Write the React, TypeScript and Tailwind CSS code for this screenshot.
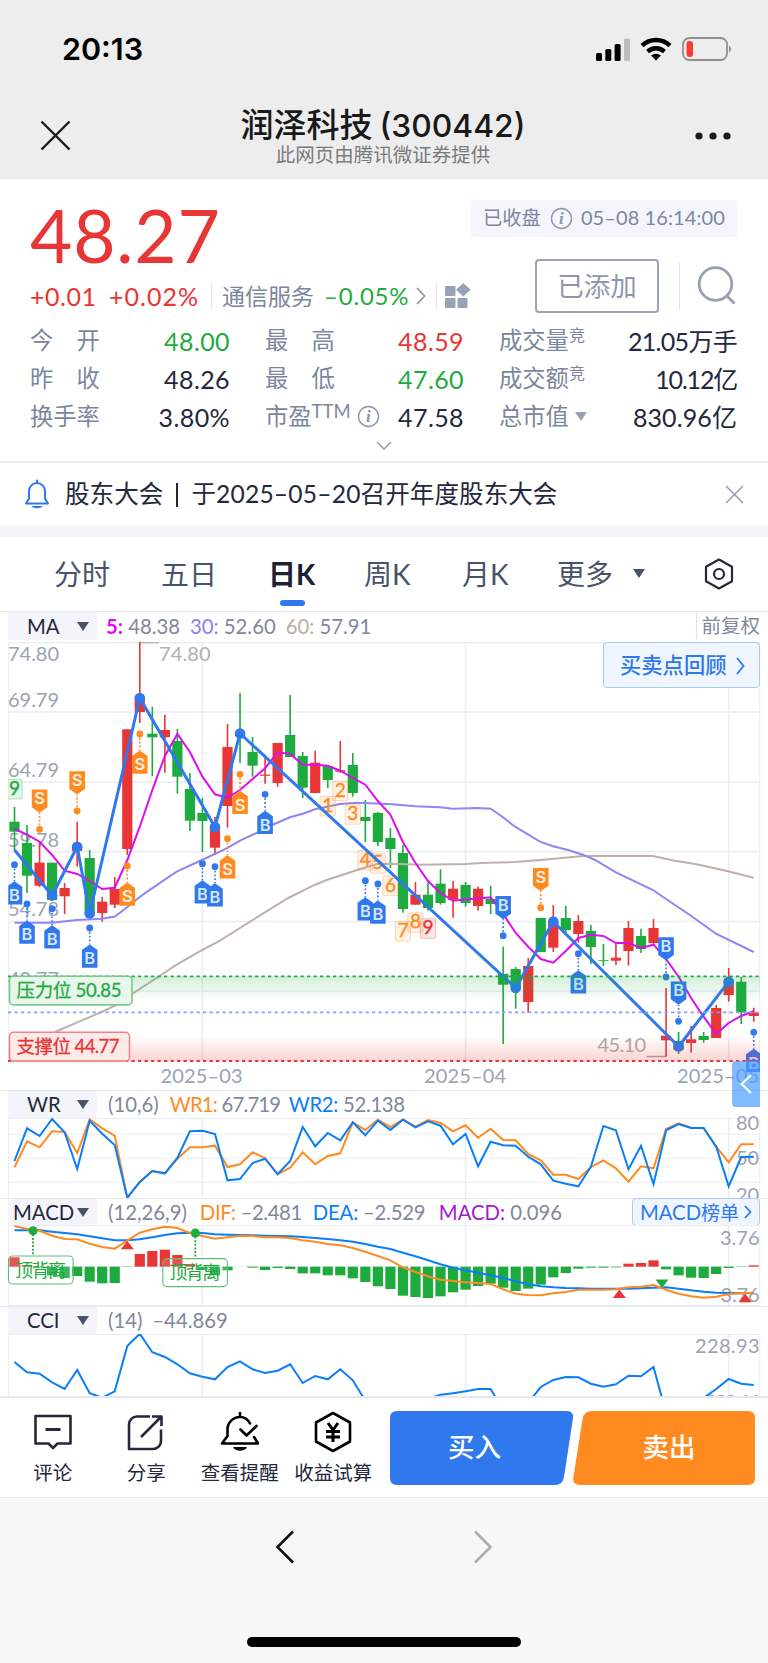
import React from "react";

const RED = "#e83535";
const GREEN = "#1dab3e";
const ORANGE = "#ff8a1f";
const BLUE = "#2f78ee";
const GRID = "#ebedf3";

const X0 = 14.5;
const STEP = 12.53;
const px = (i: number) => X0 + STEP * i;

type Candle = ["r" | "g", number, number, number, number];

// colour, high, low, body top, body bottom
const candles: Candle[] = [
  ["g", 807, 850, 821.7, 831.7],
  ["g", 825, 893, 843, 875.7],
  ["r", 841.7, 887, 862.7, 885.7],
  ["g", 862.7, 901, 862.7, 900],
  ["r", 883, 914, 888, 896.3],
  ["r", 821.7, 866.7, 846, 851],
  ["g", 850, 915, 858, 913],
  ["r", 897, 921.7, 901.7, 913],
  ["r", 877, 908, 889, 904.7],
  ["r", 729.3, 855, 729.3, 849],
  ["r", 642, 723, 698, 712],
  ["g", 706.7, 776, 733.7, 737.3],
  ["r", 714.7, 772.7, 730, 737.3],
  ["g", 729, 793.7, 741, 776.7],
  ["g", 773, 831, 789, 820.7],
  ["g", 798, 852, 813, 821],
  ["r", 817, 855, 826.7, 847.7],
  ["r", 724, 827.7, 747, 806],
  ["g", 693, 763, 733, 736],
  ["g", 737, 776.7, 752, 765.7],
  ["r", 758, 783.7, 774.6, 775.8],
  ["r", 743, 786.7, 743, 783],
  ["g", 695, 757, 735, 757],
  ["g", 752, 798, 756, 787.7],
  ["r", 750.7, 793, 762.7, 793],
  ["g", 766, 788, 766, 780],
  ["r", 741, 773, 770.3, 771.8],
  ["g", 753, 796.7, 765, 793],
  ["g", 800, 842, 817, 821],
  ["g", 812, 846, 813, 842],
  ["g", 828, 868, 838, 849],
  ["g", 845, 912.7, 853, 909],
  ["r", 882, 904.7, 894.7, 904.7],
  ["g", 882.3, 910.7, 894.7, 908],
  ["g", 869.3, 904.7, 883.7, 903],
  ["r", 881, 917.7, 888.7, 899.7],
  ["g", 882, 906.7, 885, 903],
  ["r", 886.7, 910.7, 888.7, 906],
  ["g", 885.7, 914, 899, 904],
  ["g", 946.7, 1044, 974, 984.7],
  ["g", 967, 1008.7, 969, 987],
  ["r", 958, 1013, 966, 1002],
  ["g", 918, 952, 918, 952],
  ["r", 905, 952, 921.7, 947.7],
  ["g", 906, 935, 918, 930],
  ["r", 915, 942.7, 921, 934],
  ["g", 925, 964, 931, 947],
  ["g", 944, 966, 960, 960.8],
  ["r", 943, 965, 957.7, 960.7],
  ["r", 921, 965.7, 928, 951],
  ["g", 928.7, 953, 936, 949],
  ["r", 919, 945, 928, 943],
  ["r", 988, 1056.7, 1035.7, 1040.3],
  ["g", 1032, 1054, 1041, 1050],
  ["r", 1026, 1052.7, 1039.3, 1043],
  ["g", 1032, 1042.7, 1036, 1040],
  ["r", 1005, 1038, 1008, 1038],
  ["r", 968, 1001.7, 980, 995],
  ["g", 977, 1024, 981.7, 1012.3],
  ["r", 1007.7, 1021.7, 1012.7, 1016],
];

const ma5 = [
  829, 834.7, 841.7, 855, 870.7, 874, 881, 889, 887.7, 860, 826.7, 790, 756, 734, 752, 776.7, 794.3, 797.7, 790, 779,
  768.3, 752.3, 754, 764.7, 764.7, 765.7, 770.7, 778, 784.7, 801, 814.7, 842, 863, 881, 893, 900.7, 899.5, 898.5, 897.3,
  914, 933, 946.7, 959, 962.7, 951, 938, 934.7, 936, 943, 943, 948, 944.7, 959, 976.7, 998, 1016.7, 1034, 1023, 1016,
  1011,
];

const ma30 =
  "14.5,922.7 52,922.7 77,920 102,918.7 115,916.5 128,906.5 143.3,894.3 163.3,880.7 176.7,871.7 202,860 226.7,848.3 240,840.7 260,831.3 272,825 290,817.3 302.7,813.7 315,809.3 340,804 352.7,803 365,803 391.7,804.3 415,806.3 440,807.3 453,808.7 478,808 490.7,808.7 503,817.3 515,826.7 540,841.7 553,846.3 568,850 583,854.7 595,860 616,872.3 653,890 666,899 691,915.7 716,933.7 753.7,952";
const ma60 =
  "55,1032 76.7,1022.7 100,1012.7 115,1005.7 133,993.3 155,979 175,965.7 202.3,950 220,940.7 260,915.3 288.3,898 315,884.7 326.7,880 355,870.7 376.7,864 390.7,863.7 421.7,864.7 465,864 488,862.7 515,862 541,860 583,856 618,856 653,856 674.7,860.7 691,863.3 704.7,866 728,871.3 753.7,877.7";

const swing: [number, number][] = [
  [3, 895.5], [5, 846.7], [6, 913.5], [10, 698], [16, 827], [18, 733.5], [40, 988], [43, 921.5], [53, 1046.5], [57, 981.7],
];

// candle index, anchor dot y, letter, direction of the box from the dot
const signals: [number, number, "S" | "B", "up" | "down"][] = [
  [2, 829.3, "S", "up"], [5, 811, "S", "up"], [10, 734, "S", "down"], [18, 774.3, "S", "down"],
  [17, 838.7, "S", "down"], [9, 866, "S", "down"], [42, 907.7, "S", "up"],
  [0, 864.7, "B", "down"], [1, 904, "B", "down"], [3, 908.7, "B", "down"], [6, 928, "B", "down"],
  [15, 863.7, "B", "down"], [16, 866.7, "B", "down"], [20, 794.3, "B", "down"], [28, 880.7, "B", "down"],
  [29, 884, "B", "down"], [45, 953.7, "B", "down"], [59, 1032.3, "B", "down"],
  [39, 935.7, "B", "up"], [52, 977, "B", "up"], [53, 1021.3, "B", "up"],
];

const counts: [number, number, string, string][] = [
  [0, 779, "9", GREEN], [25, 796, "1", ORANGE], [26, 780.7, "2", ORANGE], [27, 804.3, "3", ORANGE],
  [28, 850, "4", ORANGE], [29, 853.3, "5", ORANGE], [30, 875.7, "6", ORANGE], [31, 921, "7", ORANGE],
  [32, 912.3, "8", ORANGE], [33, 918.3, "9", RED],
];

const wr2 = [
  228, 130, 153, 102, 142, 252, 107, 146, 180, 338, 291, 258, 265, 219, 139, 137, 147, 286, 282, 234, 221, 268, 228, 126,
  184, 144, 166, 112, 151, 107, 135, 104, 127, 109, 122, 178, 147, 244, 170, 181, 182, 215, 238, 287, 296, 304, 245, 123,
  136, 253, 182, 298, 136, 117, 129, 129, 185, 304, 216, 215,
];
const wr1 = [
  247, 169, 187, 139, 141, 204, 103, 130, 152, 338, 291, 258, 265, 221, 187, 187, 182, 246, 238, 202, 220, 268, 248, 202,
  238, 213, 205, 112, 135, 104, 126, 103, 125, 105, 113, 139, 121, 158, 131, 165, 166, 207, 226, 269, 269, 282, 246, 226,
  250, 290, 244, 250, 132, 115, 128, 129, 185, 232, 178, 178,
];
const dif = [
  423, 432, 437, 452, 462, 463, 476, 486, 491, 467, 443, 433, 425, 429, 444, 453, 461, 457, 452, 453, 457, 457, 459, 466,
  470, 477, 481, 489, 500, 513, 526, 547, 561, 574, 584, 588, 592, 594, 597, 613, 626, 630, 631, 625, 621, 614, 614, 614,
  613, 607, 605, 600, 614, 626, 634, 638, 635, 627, 625, 623,
];
const dea = [
  436, 436, 436, 440, 444, 448, 454, 460, 466, 466, 463, 457, 450, 445, 443, 444, 448, 449, 450, 451, 452, 453, 454, 456,
  459, 462, 466, 470, 477, 485, 492, 503, 514, 526, 538, 548, 556, 563, 571, 579, 589, 598, 604, 607, 609, 610, 611, 611,
  611, 611, 610, 608, 607, 611, 616, 620, 623, 624, 625, 624,
];
const bars = [
  517, 540, 548, 571, 579, 573, 590, 595, 594, 546, 507, 498, 494, 510, 537, 555, 571, 556, 545, 548, 555, 549, 552, 565,
  565, 571, 571, 580, 591, 604, 612, 632, 636, 639, 634, 622, 614, 603, 596, 608, 618, 611, 599, 577, 564, 551, 548, 548,
  547, 536, 534, 526, 553, 571, 578, 579, 567, 549, 546, 541,
];
const cci = [
  831, 862, 866, 892, 912, 855, 925, 938, 919, 783, 746, 802, 816, 838, 865, 875, 883, 846, 829, 853, 864, 857, 838, 894,
  873, 883, 853, 886, 947, 965, 965, 965, 955, 942, 929, 925, 919, 912, 912, 975, 975, 953, 906, 885, 876, 877, 896, 905,
  898, 872, 874, 846, 984, 990, 980, 939, 912, 882, 896, 900,
];

const sub = (v: number) => 1085 + v / 3;
const pts = (ys: number[]) => ys.map((y, i) => `${px(i).toFixed(1)},${y.toFixed(1)}`).join(" ");

const CJK = "font-[Lato,'Noto_Sans_CJK_SC',sans-serif]";

function Label({ x, y, w, children, fill = "#9aa2b6", size = 20 }: { x: number; y: number; w: number; children: string; fill?: string; size?: number }) {
  return (
    <text x={x} y={y} textLength={w} fontSize={size} fill={fill}>
      {children}
    </text>
  );
}

function VGrid({ top, bottom }: { top: number; bottom: number }) {
  return (
    <g stroke={GRID}>
      {[8.5, 202.3, 465.5, 728.7, 759.7].map((x) => (
        <line key={x} x1={x} x2={x} y1={top} y2={bottom} strokeWidth={x === 8.5 || x === 759.7 ? 1 : 1.6} />
      ))}
    </g>
  );
}

function Signal({ i, y, letter, dir }: { i: number; y: number; letter: string; dir: "up" | "down" }) {
  const x = px(i);
  const c = letter === "S" ? ORANGE : BLUE;
  const s = dir === "up" ? -1 : 1;
  const tip = y + 16.5 * s;
  const shoulder = y + 22 * s;
  const end = y + 39.8 * s;
  return (
    <g>
      <circle cx={x} cy={y} r="3.4" fill={c} />
      <line x1={x} x2={x} y1={y + 4 * s} y2={tip} stroke={c} strokeWidth="1.6" strokeDasharray="1.8 2" />
      <path d={`M${x} ${tip}L${x + 7.8} ${shoulder}V${end}H${x - 7.8}V${shoulder}Z`} fill={c} />
      <text x={x} y={(dir === "up" ? y - 31 : y + 30.4) + 6} textAnchor="middle" fontSize="16.5" fontWeight="600" fill={letter === "S" ? "#fff1e0" : "#d5e6ff"} className="font-['Inter']">
        {letter}
      </text>
    </g>
  );
}

function MainChart() {
  return (
    <svg width="768" height="448" viewBox="0 642 768 448" className={`block ${CJK}`}>
      <defs>
        <linearGradient id="res" x1="0" x2="0" y1="0" y2="1">
          <stop offset="0" stopColor="#1dab3e" stopOpacity=".2" />
          <stop offset="1" stopColor="#1dab3e" stopOpacity="0" />
        </linearGradient>
        <linearGradient id="sup" x1="0" x2="0" y1="0" y2="1">
          <stop offset="0" stopColor="#e83535" stopOpacity="0" />
          <stop offset="1" stopColor="#e83535" stopOpacity=".22" />
        </linearGradient>
        <clipPath id="plot">
          <rect x="8.3" y="642" width="751.7" height="448" />
        </clipPath>
      </defs>
      <g stroke={GRID} strokeWidth="1.6">
        {[642.6, 712, 782, 851.7, 921.5, 991].map((y) => (
          <line key={y} x1="8" x2="760" y1={y} y2={y} />
        ))}
      </g>
      <VGrid top={642} bottom={1061} />
      <Label x={8} y={661} w={51}>74.80</Label>
      <Label x={8} y={707} w={51}>69.79</Label>
      <Label x={8} y={777} w={51}>64.79</Label>
      <Label x={8} y={846.7} w={51}>59.78</Label>
      <Label x={8} y={916.3} w={51}>54.78</Label>
      <Label x={8} y={986} w={51}>49.77</Label>
      <Label x={159} y={661} w={51.5} fill="#b0b0b0">74.80</Label>
      <path d="M139.5 642.3H159" stroke="#b4b4b4" strokeWidth="2" />
      <Label x={597.5} y={1051.5} w={48.5} fill="#b0aaaa">45.10</Label>
      <path d="M646.5 1056.5H666" stroke="#b8a4a4" strokeWidth="1.5" />
      <Label x={160.5} y={1083} w={82}>2025–03</Label>
      <Label x={424} y={1083} w={82}>2025–04</Label>
      <Label x={677} y={1083} w={82}>2025–05</Label>

      <g clipPath="url(#plot)">
        {candles.map(([c, hi, lo, top, bot], i) => {
          const col = c === "r" ? RED : GREEN;
          return (
            <g key={i} fill={col}>
              <rect x={px(i) - 0.8} y={hi} width="1.6" height={lo - hi} />
              <rect x={px(i) - 5.1} y={top} width="10.2" height={bot - top} />
            </g>
          );
        })}
        <polyline points={ma60} fill="none" stroke="#bfb0aa" strokeWidth="2" />
        <polyline points={ma30} fill="none" stroke="#8f86f5" strokeWidth="2" />
        <polyline points={pts(ma5)} fill="none" stroke="#dd0df0" strokeWidth="2" />
        {counts.map(([i, y, t, c], k) => (
          <g key={k}>
            <rect x={px(i) - 7.6} y={y + 0.5} width="15.2" height="19.5" rx="1" fill={c} fillOpacity=".12" stroke={c} strokeOpacity=".3" />
            <text x={px(i)} y={y + 16} textAnchor="middle" fontSize="19" fill={c} stroke={c} strokeWidth=".4">
              {t}
            </text>
          </g>
        ))}
        <polyline points={`14.5,850 ${swing.map(([i, y]) => `${px(i)},${y}`).join(" ")}`} fill="none" stroke={BLUE} strokeWidth="3" strokeLinejoin="round" />
        {swing.map(([i, y]) => (
          <circle key={i} cx={px(i)} cy={y} r="5.3" fill={BLUE} />
        ))}
        {signals.map(([i, y, l, d], k) => (
          <Signal key={k} i={i} y={y} letter={l} dir={d} />
        ))}
        <rect x="8" y="976" width="752" height="25" fill="url(#res)" />
        <rect x="8" y="1036" width="752" height="25" fill="url(#sup)" />
      </g>
      <g strokeWidth="1.8" strokeDasharray="3.3 3.2">
        <path d="M8 976.3H760" stroke={GREEN} />
        <path d="M8 1012.3H760" stroke="#7ba8f5" />
        <path d="M8 1061H760" stroke={RED} />
      </g>
      <rect x="9.5" y="976.3" width="122.5" height="28.6" rx="4" fill="#e8f6eb" stroke="#79c98a" strokeWidth="1.6" />
      <g stroke={GREEN} strokeWidth=".3">
        <Label x={16.5} y={997.2} w={105} fill={GREEN} size={18.5}>压力位 50.85</Label>
      </g>
      <rect x="9.5" y="1032.3" width="120" height="28.8" rx="4" fill="#fdeaea" stroke="#f08585" strokeWidth="1.6" />
      <g stroke={RED} strokeWidth=".3">
        <Label x={16.5} y={1053.4} w={103} fill={RED} size={18.5}>支撑位 44.77</Label>
      </g>
    </svg>
  );
}

function WrChart() {
  return (
    <svg width="768" height="86" viewBox="0 1112 768 86" className={`relative -mt-[6px] block ${CJK}`}>
      <g stroke={GRID} strokeWidth="1">
        {[1118.5, 1134.3, 1158.3, 1182.3].map((y) => (
          <line key={y} x1="8" x2="760" y1={y} y2={y} />
        ))}
      </g>
      <VGrid top={1118} bottom={1198} />
      <Label x={736} y={1130} w={23}>80</Label>
      <Label x={736} y={1165} w={23}>50</Label>
      <Label x={736} y={1201.5} w={23}>20</Label>
      <polyline points={pts(wr1.map(sub))} fill="none" stroke={ORANGE} strokeWidth="2" />
      <polyline points={pts(wr2.map(sub))} fill="none" stroke="#0a7dfa" strokeWidth="2" />
    </svg>
  );
}

function Divergence({ x, y, dotX, dotY }: { x: number; y: number; dotX: number; dotY: number }) {
  return (
    <g>
      <line x1={dotX} x2={dotX} y1={dotY} y2={y} stroke={GREEN} strokeWidth="1.8" strokeDasharray="2 1.6" />
      <circle cx={dotX} cy={dotY} r="4.5" fill={GREEN} />
      <rect x={x} y={y} width="64.6" height="28" rx="4" fill="#fff" fillOpacity=".15" stroke="#5cc074" strokeWidth="1.1" />
      <text x={x + 6.5} y={y + 20.5} textLength="51" fontSize="18" fill={GREEN}>
        顶背离
      </text>
    </g>
  );
}

function MacdChart() {
  const zero = sub(545);
  return (
    <svg width="768" height="81" viewBox="0 1225 768 81" className={`block ${CJK}`}>
      <path d="M8 1225.5H760M8 1266.7H760M8 1305.5H760" stroke={GRID} strokeWidth="1" />
      <VGrid top={1225} bottom={1306} />
      <Label x={720} y={1245} w={39.5}>3.76</Label>
      <Label x={709} y={1301.7} w={50.5}>–3.76</Label>
      {bars.map((v, i) => {
        const y = sub(v);
        return <rect key={i} x={px(i) - 5.1} y={Math.min(y, zero)} width="10.2" height={Math.abs(y - zero)} fill={v < 545 ? RED : GREEN} />;
      })}
      <polyline points={pts(dea.map(sub))} fill="none" stroke="#0a7dfa" strokeWidth="2" />
      <polyline points={pts(dif.map(sub))} fill="none" stroke={ORANGE} strokeWidth="2" />
      <path d="M127.3 1241l6.5 8.3h-13zM619.3 1289.5l6.5 8.5h-13zM745.3 1293.7l6.5 8.5h-13z" fill={RED} />
      <path d="M662 1288l6.5-8.6h-13z" fill={GREEN} />
      <Divergence x={8.5} y={1256} dotX={33} dotY={1230.7} />
      <Divergence x={162.8} y={1258.6} dotX={195.3} dotY={1233} />
    </svg>
  );
}

function CciChart() {
  return (
    <svg width="768" height="62" viewBox="0 1334 768 62" className={`block ${CJK}`}>
      <path d="M8 1334.3H760" stroke={GRID} strokeWidth="1.4" />
      <VGrid top={1334} bottom={1396} />
      <Label x={695} y={1353.3} w={64.5}>228.93</Label>
      <Label x={695} y={1409} w={64.5}>–220.44</Label>
      <polyline points={pts(cci.map(sub))} fill="none" stroke="#0a7dfa" strokeWidth="2" />
    </svg>
  );
}

function Caret({ className = "" }: { className?: string }) {
  return (
    <svg width="12" height="9" viewBox="0 0 12 9" className={className}>
      <path d="M0 0h12L6 9z" fill="currentColor" />
    </svg>
  );
}

function IndicatorName({ children, tight }: { children: string; tight?: boolean }) {
  return (
    <div className={`flex h-full w-[89px] items-center justify-between bg-[#f4f5fa] pr-2 text-[#23283c] ${tight ? "pl-[5px]" : "pl-[19px]"}`}>
      <span>{children}</span>
      <Caret className="text-[#48526a]" />
    </div>
  );
}

function IndicatorRow({ name, tight, height, children }: { name: string; tight?: boolean; height: string; children: React.ReactNode }) {
  return (
    <div className={`flex items-center whitespace-nowrap border-t border-[#e6e9f0] pl-2 pr-2 text-[20.3px] leading-none text-[#7f889e] ${height}`}>
      <IndicatorName tight={tight}>{name}</IndicatorName>
      {children}
    </div>
  );
}

function Info() {
  return (
    <svg width="23" height="23" viewBox="0 0 23 23" className="shrink-0">
      <circle cx="11.5" cy="11.5" r="10" fill="none" stroke="#8b95ab" strokeWidth="1.4" />
      <text x="11.3" y="17.3" textAnchor="middle" fontSize="17" fontStyle="italic" fontWeight="700" fill="#8b95ab" className="font-['Liberation_Serif']">
        i
      </text>
    </svg>
  );
}

function Stat({ label, value, color = "text-[#23283c]", width, extra, tracking = "tracking-[0.4px]" }: { label: string; value: string; color?: string; width: string; extra?: React.ReactNode; tracking?: string }) {
  return (
    <div className={`flex h-[38px] items-center justify-between ${width}`}>
      <div className="flex items-center text-[23.3px] text-[#7c86a0]">
        <span className="whitespace-pre">{label}</span>
        {extra}
      </div>
      <span className={`text-[25px] ${tracking} ${color}`}>{value}</span>
    </div>
  );
}

function StatusBar() {
  return (
    <div className="flex h-[98px] items-center justify-between pl-[62px] pr-9">
      <span className="font-['Inter'] text-[30.5px] font-semibold leading-none text-black">20:13</span>
      <div className="flex items-center gap-[10px]">
        <svg width="34" height="23" viewBox="0 0 34 23">
          <rect x="0" y="15" width="6" height="8" rx="1.6" />
          <rect x="9.3" y="11" width="6" height="12" rx="1.6" />
          <rect x="18.6" y="6" width="6" height="17" rx="1.6" />
          <rect x="28" y="0.5" width="6" height="22.5" rx="1.6" fill="#bdbdbd" />
        </svg>
        <svg width="32" height="24" viewBox="0 0 32 24">
          <path d="M16 23.5L11.2 18.6a7 7 0 0 1 9.6 0z" />
          <path d="M7.6 14.6a12.2 12.2 0 0 1 16.8 0" fill="none" stroke="#000" strokeWidth="4.4" />
          <path d="M2 8.6a20.4 20.4 0 0 1 28 0" fill="none" stroke="#000" strokeWidth="4.4" />
        </svg>
        <svg width="50" height="24" viewBox="0 0 50 24">
          <rect x="1" y="1" width="44" height="22" rx="6.5" fill="none" stroke="#8f8f8f" strokeWidth="1.8" />
          <rect x="4.5" y="4" width="6.5" height="16" rx="3" fill="#ff3b30" />
          <path d="M47 8.5a4 4 0 0 1 0 7z" fill="#8f8f8f" />
        </svg>
      </div>
    </div>
  );
}

function TitleBar() {
  return (
    <div className="flex h-[81px] justify-between pl-10 pr-[37px]">
      <svg width="31" height="31" viewBox="0 0 31 31" className="mt-[22px]">
        <path d="M1.5 1.5l28 28M29.5 1.5l-28 28" stroke="#1a1a1a" strokeWidth="2.4" />
      </svg>
      <div className="flex flex-col items-center text-[#191919]">
        <h1 className="mt-[9px] flex h-[37px] items-center gap-[7px] whitespace-nowrap font-['Inter','Noto_Sans_CJK_SC',sans-serif] text-[31.8px] font-medium leading-none">
          <span className="text-[33px]">润泽科技</span>
          <span>(300442)</span>
        </h1>
        <p className="text-[19.5px] leading-[22px] text-[#7b7b7b]">此网页由腾讯微证券提供</p>
      </div>
      <svg width="36" height="12" viewBox="0 0 36 12" className="mt-8">
        <circle cx="4" cy="6" r="3.6" fill="#191919" />
        <circle cx="18" cy="6" r="3.6" fill="#191919" />
        <circle cx="32" cy="6" r="3.6" fill="#191919" />
      </svg>
    </div>
  );
}

function Quote() {
  return (
    <section className="h-[282px] pl-[30px] pr-[31px]">
      <div className="flex h-[134px] justify-between">
        <div className="flex flex-col">
          <div className="mt-[17px] text-[73px] leading-[78px] tracking-[0.8px] text-[#e83535]">48.27</div>
          <div className="mt-[9px] flex h-[26px] items-center whitespace-nowrap text-[25px] leading-none text-[#e83535]">
            <span className="w-[79px] tracking-[0.5px]">+0.01</span>
            <span className="w-[93px] tracking-[1px]">+0.02%</span>
            <span className="ml-[9px] h-6 w-px bg-[#dfe2ea]" />
            <span className="ml-[10px] text-[23px] text-[#7c86a0]">通信服务</span>
            <span className="ml-[10px] w-[85px] text-[24px] tracking-[0.8px] text-[#1dab3e]">–0.05%</span>
            <svg width="10" height="18" viewBox="0 0 10 18" className="ml-[7px]">
              <path d="M1 1l7.6 8L1 17" fill="none" stroke="#8b95ab" strokeWidth="1.7" />
            </svg>
            <span className="ml-[10px] h-6 w-px bg-[#dfe2ea]" />
            <svg width="26" height="26" viewBox="0 0 26 26" className="ml-2" fill="#98a1b5">
              <rect x="0" y="3" width="10.5" height="10" rx="1" />
              <rect x="0" y="15" width="10.5" height="10" rx="1" />
              <rect x="12.5" y="15" width="10" height="10" rx="1" />
              <path d="M18.3 0l7.3 6.7-7.3 6.7L11 6.7z" />
            </svg>
          </div>
        </div>
        <div className="flex flex-col items-end">
          <div className="mt-[21px] flex h-[37px] items-center rounded bg-[#f4f6fb] px-3 text-[#7c86a0]">
            <span className="text-[19.3px]">已收盘</span>
            <span className="ml-[9px]"><Info /></span>
            <span className="-mt-[3px] ml-2 whitespace-nowrap text-[20px] tracking-[0.1px]">05–08 16:14:00</span>
          </div>
          <div className="mt-[22px] flex items-center">
            <div className="flex h-[54px] w-[124px] items-center justify-center rounded-[4px] border-2 border-[#98a1b8] text-[26.5px] leading-none text-[#8e97ae]">已添加</div>
            <div className="ml-5 h-12 w-px bg-[#dfe2ea]" />
            <svg width="40" height="40" viewBox="0 0 40 40" className="ml-[17px]">
              <circle cx="18.5" cy="18" r="16.3" fill="none" stroke="#98a1b5" strokeWidth="2.8" />
              <path d="M29 29l8.5 8.5" stroke="#98a1b5" strokeWidth="2.8" />
            </svg>
          </div>
        </div>
      </div>
      <div className="mt-[9px] grid grid-cols-[200px_199px_238px] gap-x-[35px] leading-none">
        <Stat width="w-[200px]" label={"今　开"} value="48.00" color="text-[#1dab3e]" />
        <Stat width="w-[199px]" label={"最　高"} value="48.59" color="text-[#e83535]" />
        <Stat width="w-[238px]" label="成交量" value="21.05万手" tracking="tracking-[-0.7px]" extra={<span className="-mt-3 text-[16px]">竞</span>} />
        <Stat width="w-[200px]" label={"昨　收"} value="48.26" />
        <Stat width="w-[199px]" label={"最　低"} value="47.60" color="text-[#1dab3e]" />
        <Stat width="w-[238px]" label="成交额" value="10.12亿" tracking="tracking-[-1.2px]" extra={<span className="-mt-3 text-[16px]">竞</span>} />
        <Stat width="w-[200px]" label="换手率" value="3.80%" />
        <Stat
          width="w-[199px]"
          label="市盈"
          value="47.58"
          extra={
            <>
              <span className="-mt-3 mr-[6px] text-[18.5px]">TTM</span>
              <Info />
            </>
          }
        />
        <Stat width="w-[238px]" label="总市值" value="830.96亿" tracking="tracking-[0.1px]" extra={<Caret className="ml-[6px] text-[#98a1b5]" />} />
      </div>
      <div className="flex justify-center pt-[5px]">
        <svg width="16" height="9" viewBox="0 0 16 9">
          <path d="M1 1l7 7 7-7" fill="none" stroke="#98a1b5" strokeWidth="1.7" />
        </svg>
      </div>
    </section>
  );
}

function Notice() {
  return (
    <div className="flex h-[64px] items-center border-t-2 border-[#eceef4] pl-[23px] pr-6">
      <svg width="28" height="30" viewBox="0 0 28 30">
        <path d="M14 1.5v2M3 24.5l3-5V12a8 8 0 0 1 16 0v7.5l3 5z" fill="none" stroke={BLUE} strokeWidth="2" strokeLinejoin="round" strokeLinecap="round" />
        <path d="M8.5 27h11c-1.5 3-9.5 3-11 0z" fill={BLUE} />
      </svg>
      <div className="ml-[14px] flex-1 whitespace-nowrap text-[24.6px] leading-none text-[#23283c]">
        股东大会<span className="mx-[13px] inline-block h-6 w-[2px] bg-[#23283c] align-[-4px]" />于<span className="tracking-[0.2px]">2025–05–20</span>召开年度股东大会
      </div>
      <svg width="19" height="19" viewBox="0 0 19 19">
        <path d="M1 1l17 17M18 1L1 18" stroke="#98a1b5" strokeWidth="1.7" />
      </svg>
    </div>
  );
}

function Tabs() {
  return (
    <nav className="flex h-[74px] items-center pb-px text-[28px] leading-none text-[#48526a]">
      <span className="ml-[54px] w-[107px]">分时</span>
      <span className="w-[107px]">五日</span>
      <span className="relative w-[96px] font-bold text-[#1c2236]">
        日K
        <i className="absolute left-[12px] top-[40px] h-[6.5px] w-[25px] rounded-full bg-[#2f78ee]" />
      </span>
      <span className="w-[98px]">周K</span>
      <span className="w-[95px]">月K</span>
      <span className="w-[76px]">更多</span>
      <Caret />
      <svg width="30" height="32" viewBox="0 0 30 32" className="ml-[59px]" fill="none" stroke="#23283c" strokeWidth="2.2">
        <path d="M15 1.5l13 7.2v14.6l-13 7.2-13-7.200V8.7z" strokeLinejoin="round" />
        <circle cx="15" cy="16" r="5" />
      </svg>
    </nav>
  );
}

function Action({ label, children }: { label: string; children: React.ReactNode }) {
  return (
    <div className="flex w-[93.5px] flex-col items-center whitespace-nowrap">
      <svg width="42" height="42" viewBox="0 0 42 42" fill="none" strokeWidth="2.6" strokeLinejoin="round">
        {children}
      </svg>
      <span className="mt-[9px] text-[19.5px] leading-[22px] text-[#23283c]">{label}</span>
    </div>
  );
}

function BottomBar() {
  return (
    <div className="flex h-[101px] border-t-2 border-[#e4e7ef] bg-white pl-[6px] pt-[13px]">
      <Action label="评论">
        <path d="M3.500 5h35v27.500h-13L21 37l-4.500-4.500h-13z" stroke="#23283c" />
        <path d="M13.500 18.500h15" stroke="#23283c" strokeWidth="3" />
      </Action>
      <Action label="分享">
        <path d="M25 5.500H12a8 8 0 0 0-8 8V38h24a8 8 0 0 0 8-8V18.500M16 26L36 6M27 5.500h9.500V15" stroke="#23283c" />
      </Action>
      <Action label="查看提醒">
        <path d="M21 2v4M31 12.500C29 8.500 25 6 21 6A12.500 12.500 0 0 0 8.500 18.500V25L3 32.500h36L35 26" stroke="#000" strokeLinecap="round" />
        <path d="M21.500 18.500l6 6L37.500 15" stroke="#000" strokeLinecap="round" />
        <path d="M14 36h14c-2 5-12 5-14 0z" fill="#000" />
      </Action>
      <Action label="收益试算">
        <path d="M21 2l17 9.500v19L21 40 4 30.500v-19z" stroke="#000" />
        <path d="M16 12l5 7 5-7M21 19v12M14 20.500h14M14 26h14" stroke="#000" strokeWidth="3" />
      </Action>
      <div className="ml-[10px] flex">
        <button className="relative h-[74px] w-[183px] pr-[14px] text-[26.5px] font-medium text-white">
          <svg width="183" height="74" viewBox="0 0 183 74" className="absolute inset-0">
            <path d="M7 0h169q8 0 7 7l-9 59q-1.500 8-9 8H7q-7 0-7-7V7q0-7 7-7z" fill={BLUE} />
          </svg>
          <span className="relative">买入</span>
        </button>
        <button className="relative h-[74px] w-[182px] pl-[10px] text-[26.5px] font-medium text-white">
          <svg width="182" height="74" viewBox="0 0 182 74" className="absolute inset-0">
            <path d="M175 0H19q-8 0-9.500 8l-9 58q-1.500 8 6.500 8h168q7 0 7-7V7q0-7-7-7z" fill={ORANGE} />
          </svg>
          <span className="relative">卖出</span>
        </button>
      </div>
    </div>
  );
}

export default function App() {
  return (
    <div className="h-[1663px] w-[768px] overflow-hidden bg-white font-[Lato,'Noto_Sans_CJK_SC',sans-serif]">
      <header className="h-[179px] bg-[#ededed]">
        <StatusBar />
        <TitleBar />
      </header>
      <Quote />
      <Notice />
      <div className="h-3 bg-[#f4f5fa]" />
      <Tabs />
      <div className="relative">
        <IndicatorRow name="MA" height="h-[31px] pb-[2px]">
          <div className="flex flex-1 gap-[10px] pl-[9px]">
            <span><b className="font-bold text-[#dd0df0]">5:</b> 48.38</span>
            <span><span className="text-[#8f7df5]">30:</span> 52.60</span>
            <span><span className="text-[#bfaaa0]">60:</span> 57.91</span>
          </div>
          <div className="flex h-full items-center border-l border-[#e0e3ea] pl-1 text-[19.5px]">前复权</div>
        </IndicatorRow>
        <MainChart />
        <div className="absolute right-2 top-[31px] flex h-[46px] w-[157px] items-center rounded-[4px] border border-[#a9c9f8] bg-[#eff6ff] pl-4 pt-px text-[21.3px] font-medium leading-none text-[#2f78ee]">
          买卖点回顾
          <svg width="9" height="18" viewBox="0 0 9 18" className="ml-[9px]">
            <path d="M1 1l6.500 8L1 17" fill="none" stroke={BLUE} strokeWidth="1.8" />
          </svg>
        </div>
        <div className="absolute right-2 top-[450px] z-10 flex h-[46px] w-7 items-center justify-center rounded-l-[4px] bg-[#4a9cff]/70">
          <svg width="12" height="20" viewBox="0 0 12 20">
            <path d="M11 1L1.500 10l9.500 9" fill="none" stroke="#fff" strokeWidth="2.2" />
          </svg>
        </div>
      </div>
      <IndicatorRow name="WR" height="h-[28px]">
        <span className="ml-[11px]">(10,6)</span>
        <span className="ml-[11px] w-[108px] tracking-[-0.8px]"><span className="text-[#ff8a1f]">WR1:</span> 67.719</span>
        <span className="ml-[11px] tracking-[-0.3px]"><span className="text-[#0a7dfa]">WR2:</span> 52.138</span>
      </IndicatorRow>
      <WrChart />
      <IndicatorRow name="MACD" tight height="h-[27px]">
        <span className="ml-[11px]">(12,26,9)</span>
        <span className="ml-[13px] w-[102px] tracking-[-0.4px]"><span className="text-[#ff8a1f]">DIF:</span> –2.481</span>
        <span className="ml-[11px] w-[115px] tracking-[-0.2px]"><span className="text-[#0a7dfa]">DEA:</span> –2.529</span>
        <span className="ml-[11px]"><span className="text-[#a020c8]">MACD:</span> 0.096</span>
        <span className="ml-auto flex h-[28px] w-[128px] items-center justify-center rounded-[4px] border border-[#a9c9f8] bg-[#eff6ff] text-[#2f78ee]">
          MACD<span className="text-[19px]">榜单</span>
          <svg width="8" height="14" viewBox="0 0 8 14" className="ml-[5px]">
            <path d="M1 1l5.500 6L1 13" fill="none" stroke={BLUE} strokeWidth="1.8" />
          </svg>
        </span>
      </IndicatorRow>
      <MacdChart />
      <IndicatorRow name="CCI" height="h-[28px]">
        <span className="ml-[11px]">(14)</span>
        <span className="ml-[10px]">–44.869</span>
      </IndicatorRow>
      <CciChart />
      <BottomBar />
      <footer className="flex h-[166px] flex-col items-center justify-between border-t border-[#ebebeb] bg-[#f7f7f7] pb-4 pt-8">
        <div className="flex w-[218px] justify-between">
          <svg width="20" height="34" viewBox="0 0 20 34">
            <path d="M18 1.500L2.500 17 18 32.500" fill="none" stroke="#111" strokeWidth="2.6" />
          </svg>
          <svg width="20" height="34" viewBox="0 0 20 34">
            <path d="M2 1.500L17.500 17 2 32.500" fill="none" stroke="#adadad" strokeWidth="2.6" />
          </svg>
        </div>
        <div className="h-[10px] w-[274px] rounded-full bg-black" />
      </footer>
    </div>
  );
}
